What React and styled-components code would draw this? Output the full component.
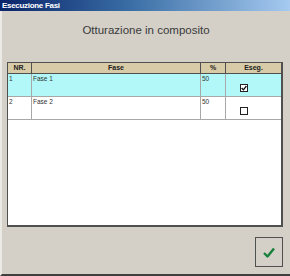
import React from "react";
import styled, { createGlobalStyle } from "styled-components";

const GlobalStyle = createGlobalStyle`
  html, body {
    margin: 0;
    padding: 0;
    background: #d4d0c8;
  }
`;

const fasi = [
  { id: "1", nome: "Fase 1", perc: "50", eseguita: true },
  { id: "2", nome: "Fase 2", perc: "50", eseguita: false },
];

const Window = styled.div`
  width: 290px;
  height: 276px;
  box-sizing: border-box;
  display: flex;
  flex-direction: column;
  background: #d4d0c8;
  border-left: 2px solid #eceae4;
  border-bottom: 2px solid #404040;
  font-family: "Liberation Sans", Arial, sans-serif;
`;

const TitleBar = styled.div`
  height: 11px;
  margin-left: -2px;
  padding-left: 2px;
  background: linear-gradient(90deg, #0a246a 0%, #3a6ea5 45%, #a6caf0 100%);
  color: #fff;
  font-weight: bold;
  font-size: 8px;
  line-height: 11px;
  letter-spacing: -0.3px;
`;

const Heading = styled.div`
  margin-top: 12px;
  text-align: center;
  font-size: 11.5px;
  line-height: 14px;
  color: #3a3a3a;
`;

const Grid = styled.div`
  margin: 25px 7px 0 5px;
  height: 165px;
  box-sizing: border-box;
  border: 1px solid #505050;
  border-right-width: 2px;
  border-bottom-width: 2px;
  background: #fff;
  display: grid;
  grid-template-columns: 24px 169px 25px 1fr;
  grid-auto-rows: min-content;
`;

const HeadCell = styled.div`
  height: 10px;
  background: #d8cba7;
  border-bottom: 1px solid #505050;
  border-right: ${(p) => (p.last ? "none" : "1px solid #505050")};
  font-size: 7px;
  font-weight: bold;
  line-height: 10px;
  color: #222;
  text-align: center;
`;

const Cell = styled.div`
  height: 22px;
  background: ${(p) => (p.selected ? "#b2f8f8" : "#fff")};
  border-bottom: 1px solid #a8a8a8;
  border-right: ${(p) => (p.last ? "none" : "1px solid #a8a8a8")};
  font-size: 6.5px;
  line-height: 9px;
  color: #333;
  padding-left: 1px;
  box-sizing: content-box;
`;

const CheckCell = styled(Cell)`
  display: flex;
  align-items: flex-start;
  padding-left: 14px;
`;

const Box = styled.div`
  margin-top: 10px;
  width: 8px;
  height: 8px;
  box-sizing: border-box;
  border: 1px solid #222;
  background: #fff;
  display: flex;
  align-items: center;
  justify-content: center;
`;

const Footer = styled.div`
  display: flex;
  justify-content: flex-end;
  padding: 10px 7px 0 0;
`;

const OkButton = styled.button`
  width: 28px;
  height: 30px;
  padding: 0;
  background: #d4d0c8;
  border: 1px solid #505050;
  display: flex;
  align-items: center;
  justify-content: center;
`;

function Check({ on }) {
  return (
    <Box>
      {on && (
        <svg width="6" height="6" viewBox="0 0 6 6">
          <path d="M0.6 3 L2.4 4.8 L5.4 1" stroke="#111" strokeWidth="1.3" fill="none" />
        </svg>
      )}
    </Box>
  );
}

export default function App() {
  return (
    <>
      <GlobalStyle />
      <Window>
        <TitleBar>Esecuzione Fasi</TitleBar>
        <Heading>Otturazione in composito</Heading>
        <Grid>
          <HeadCell>NR.</HeadCell>
          <HeadCell>Fase</HeadCell>
          <HeadCell>%</HeadCell>
          <HeadCell last>Eseg.</HeadCell>
          {fasi.map((f, i) => (
            <React.Fragment key={f.id}>
              <Cell selected={i === 0}>{f.id}</Cell>
              <Cell selected={i === 0}>{f.nome}</Cell>
              <Cell selected={i === 0}>{f.perc}</Cell>
              <CheckCell selected={i === 0} last>
                <Check on={f.eseguita} />
              </CheckCell>
            </React.Fragment>
          ))}
        </Grid>
        <Footer>
          <OkButton>
            <svg width="12" height="11" viewBox="0 0 12 11">
              <path d="M1 6 L4.5 9.5 L11 1.5" stroke="#17803a" strokeWidth="2.4" fill="none" strokeLinejoin="round" />
            </svg>
          </OkButton>
        </Footer>
      </Window>
    </>
  );
}
